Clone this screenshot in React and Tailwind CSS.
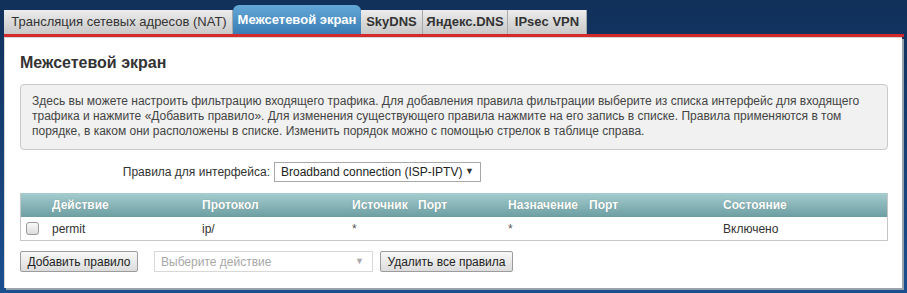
import React from "react";

const FONT = { fontFamily: '"Liberation Sans", Arial, sans-serif' };

const TABS = [
  { label: "Трансляция сетевых адресов (NAT)", w: "w-[229px]", bold: false },
  { label: "Межсетевой экран", w: "w-[128px]", active: true },
  { label: "SkyDNS", w: "w-[62px]", bold: true },
  { label: "Яндекс.DNS", w: "w-[85px]", bold: true },
  { label: "IPsec VPN", w: "w-[79px]", bold: true },
];

const COLS = "grid grid-cols-[31px_150px_150px_66px_90px_81px_134px_1fr]";

function Tab({ label, w, active, bold }) {
  if (active) {
    return (
      <div
        className={`${w} h-[29px] flex items-center justify-center rounded-t-[6px] bg-gradient-to-b from-[#64a8d8] to-[#3a7cb4] text-white text-[13px] font-bold`}
      >
        {label}
      </div>
    );
  }
  return (
    <div
      className={`${w} h-[24px] flex items-center justify-center border-r border-[#a9a9a9] bg-gradient-to-b from-[#ececec] to-[#c8c8c8] text-[#333] text-[13px] ${bold ? "font-bold" : "pl-[2px]"}`}
    >
      {label}
    </div>
  );
}

export default function App() {
  return (
    <div
      style={FONT}
      className="w-[907px] h-[293px] bg-gradient-to-b from-[#11305a] to-[#1a4f90] pl-[4px] pr-[5px] pt-[5px]"
    >
      <div className="flex items-end h-[29px]">
        {TABS.map((t) => (
          <Tab key={t.label} {...t} />
        ))}
      </div>
      <div className="h-[3px] bg-[#d32a2e] mr-[-2px]" />
      <div className="bg-white border-t border-[#c8c8c8] border-l border-[#d6d6d6] shadow-[2px_2px_0_#9aa3ad] pl-[15px] pr-[14px] pt-[15px] pb-[16px]">
        <h1 className="text-[16px] leading-[20px] font-bold text-[#333]">
          Межсетевой экран
        </h1>

        <div className="mt-[11px] rounded-[4px] border border-[#c9c9c9] bg-[#f1f1f1] pl-[11px] pt-[9px] pb-[10px] text-[12px] leading-[15px] text-[#444]">
          Здесь вы можете настроить фильтрацию входящего трафика. Для добавления правила фильтрации выберите из списка интерфейс для входящего
          <br />
          трафика и нажмите «Добавить правило». Для изменения существующего правила нажмите на его запись в списке. Правила применяются в том
          <br />
          порядке, в каком они расположены в списке. Изменить порядок можно с помощью стрелок в таблице справа.
        </div>

        <div className="mt-[12px] flex items-center text-[12px] text-[#333]">
          <div className="w-[254px] pr-[4px] text-right">Правила для интерфейса:</div>
          <div className="w-[207px] h-[20px] flex items-center justify-between border border-[#a8a8a8] bg-white pl-[6px] pr-[6px] text-[#222]">
            <span>Broadband connection (ISP-IPTV)</span>
            <span className="text-[9px] text-[#333]">▼</span>
          </div>
        </div>

        <div className="mt-[11px] border border-[#c6c6c6] border-t-0">
          <div
            className={`${COLS} h-[24px] items-center bg-gradient-to-b from-[#a6cdcf] to-[#6c9ea2] text-white text-[12px] font-bold [text-shadow:0_0_1px_rgba(0,0,0,0.25)]`}
          >
            <div />
            <div>Действие</div>
            <div>Протокол</div>
            <div>Источник</div>
            <div>Порт</div>
            <div>Назначение</div>
            <div>Порт</div>
            <div>Состояние</div>
          </div>
          <div className={`${COLS} h-[23px] items-center text-[12px] text-[#333]`}>
            <div className="pl-[5px]">
              <div className="w-[13px] h-[13px] rounded-[3px] border border-[#9a9a9a] bg-gradient-to-b from-[#fafafa] to-[#dcdcdc]" />
            </div>
            <div>permit</div>
            <div>ip/</div>
            <div className="text-[#555]">*</div>
            <div />
            <div className="text-[#555]">*</div>
            <div />
            <div>Включено</div>
          </div>
        </div>

        <div className="mt-[10px] flex items-center text-[12px]">
          <button className="h-[21px] w-[118px] rounded-[2px] border border-[#9c9c9c] bg-gradient-to-b from-[#f8f8f8] to-[#dcdcdc] text-[#222]">
            Добавить правило
          </button>
          <div className="ml-[16px] w-[219px] h-[21px] flex items-center justify-between border border-[#d8d8d8] bg-white pl-[6px] pr-[8px] text-[#a8a8a8]">
            <span>Выберите действие</span>
            <span className="text-[9px] text-[#aaa]">▼</span>
          </div>
          <button className="ml-[7px] h-[21px] w-[133px] rounded-[2px] border border-[#9c9c9c] bg-gradient-to-b from-[#f8f8f8] to-[#dcdcdc] text-[#222]">
            Удалить все правила
          </button>
        </div>
      </div>
    </div>
  );
}
